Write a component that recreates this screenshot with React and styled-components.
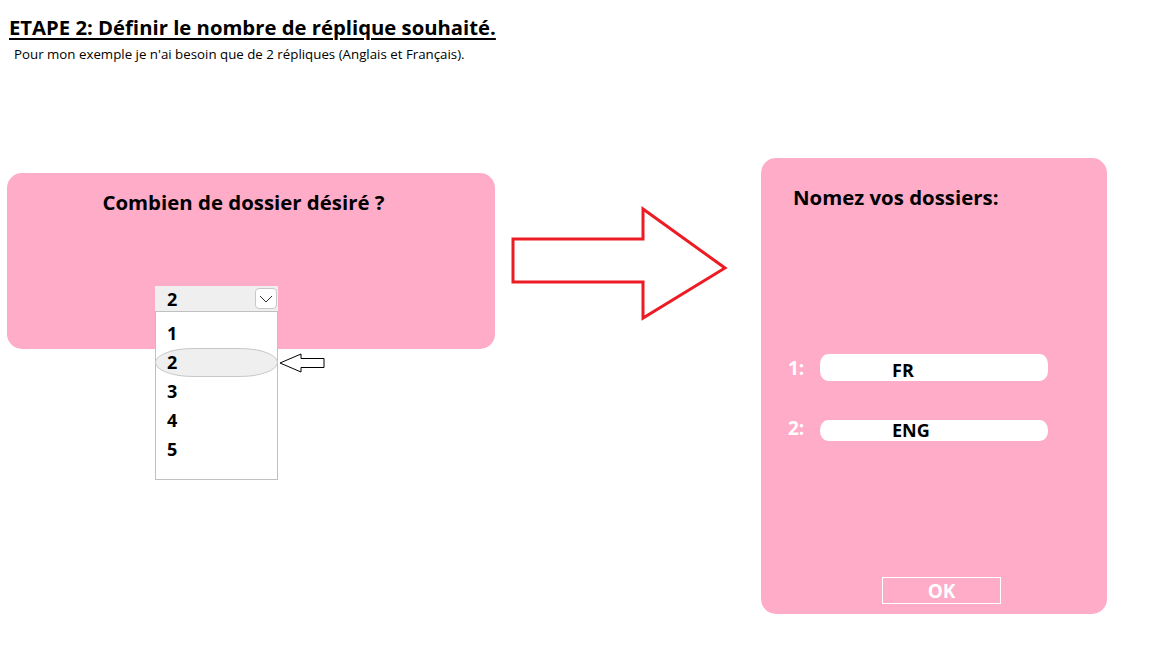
import React from "react";
import styled, { createGlobalStyle } from "styled-components";

const GlobalStyle = createGlobalStyle`
  html, body {
    margin: 0;
    padding: 0;
    background: #fff;
    font-family: "Open Sans", Lato, sans-serif;
    color: #000;
  }
`;

const PINK = "#feacc8";

const Page = styled.div`
  width: 1152px;
  height: 648px;
  overflow: hidden;
`;

const Header = styled.header`
  padding: 15px 0 0 9px;
`;

const Title = styled.h1`
  margin: 0;
  font-size: 20.3px;
  line-height: 24px;
  font-weight: 700;
  text-decoration: underline;
  text-decoration-thickness: 2px;
  text-underline-offset: 3px;
`;

const Subtitle = styled.p`
  margin: 7px 0 0 5px;
  font-size: 13.3px;
  line-height: 16px;
`;

const Main = styled.main`
  display: flex;
  align-items: flex-start;
  margin-top: 96px;
  padding-left: 7px;
`;

const Panel = styled.section`
  background: ${PINK};
  border-radius: 15px;
  width: ${(p) => p.$w}px;
  height: ${(p) => p.$h}px;
  margin-top: ${(p) => p.$top || 0}px;
  box-sizing: border-box;
  display: flex;
  flex-direction: column;
`;

const PanelTitle = styled.h2`
  margin: 0;
  font-size: 20.4px;
  line-height: 24px;
  font-weight: 700;
  text-align: ${(p) => p.$align || "left"};
`;

const Dropdown = styled.div`
  position: relative;
  width: 123px;
  margin: 72px 0 0 148px;
`;

const DropHeader = styled.div`
  height: 25px;
  background: #efefef;
  display: flex;
  align-items: center;
  justify-content: space-between;
  padding: 0 1px 0 12px;
  font-size: 18px;
  font-weight: 700;
`;

const ChevronBtn = styled.span`
  width: 20px;
  height: 19px;
  border: 1px solid #c8c8c8;
  border-radius: 4px;
  background: #fff;
  display: flex;
  align-items: center;
  justify-content: center;
`;

const List = styled.ul`
  position: absolute;
  top: 100%;
  left: 0;
  width: 123px;
  height: 169px;
  box-sizing: border-box;
  margin: 0;
  padding: 7px 0 0;
  list-style: none;
  background: #fff;
  border: 1px solid #c0c0c0;
`;

const Item = styled.li`
  position: relative;
  height: 29px;
  line-height: 29px;
  padding-left: 11px;
  font-size: 18px;
  font-weight: 700;
  box-sizing: border-box;
  ${(p) =>
    p.$active &&
    `
    background: #efefef;
    border: 1px solid #c8c8c8;
    border-radius: 40px / 15px;
    line-height: 27px;
    margin: 0 -1px;
    padding-left: 11px;
  `}
`;

const Pointer = styled.svg`
  position: absolute;
  left: 100%;
  top: 50%;
  margin: -10px 0 0 2px;
`;

const Arrow = styled.svg`
  flex: none;
  margin: 47px 0 0 15px;
`;

const Fields = styled.div`
  margin-top: 145px;
  display: flex;
  flex-direction: column;
  gap: 39px;
`;

const Row = styled.div`
  display: flex;
  align-items: center;
  padding-left: 27px;
`;

const Label = styled.span`
  width: 32px;
  color: #fff;
  font-size: 19px;
  font-weight: 700;
  margin-top: ${(p) => p.$off || 0}px;
`;

const Field = styled.div`
  width: 228px;
  height: ${(p) => p.$h}px;
  background: #fff;
  border-radius: 8px / 10px;
  box-sizing: border-box;
  padding: ${(p) => p.$pt}px 0 0 72px;
  font-size: 18px;
  line-height: 20px;
  font-weight: 700;
`;

const OkButton = styled.button`
  margin: auto 0 10px 121px;
  width: 119px;
  height: 27px;
  background: transparent;
  border: 1px solid #fff;
  color: #fff;
  font-family: inherit;
  font-size: 19px;
  font-weight: 700;
  padding: 2px 0 0;
  line-height: 23px;
`;

const options = [1, 2, 3, 4, 5];

export default function App() {
  return (
    <Page>
      <GlobalStyle />
      <Header>
        <Title>ETAPE 2: Définir le nombre de réplique souhaité.</Title>
        <Subtitle>
          Pour mon exemple je n'ai besoin que de 2 répliques (Anglais et Français).
        </Subtitle>
      </Header>

      <Main>
        <Panel $w={488} $h={176} $top={15} style={{ paddingTop: 17 }}>
          <PanelTitle $align="center" style={{ paddingRight: 15 }}>
            Combien de dossier désiré ?
          </PanelTitle>
          <Dropdown>
            <DropHeader>
              2
              <ChevronBtn>
                <svg width="14" height="8" viewBox="0 0 14 8">
                  <path d="M1 1 L7 7 L13 1" fill="none" stroke="#333" strokeWidth="1" />
                </svg>
              </ChevronBtn>
            </DropHeader>
            <List>
              {options.map((n) => (
                <Item key={n} $active={n === 2}>
                  {n}
                  {n === 2 && (
                    <Pointer width="46" height="20" viewBox="0 0 46 20">
                      <path
                        d="M1 10 L22 1 L22 5.5 L45 5.5 L45 14.5 L22 14.5 L22 19 Z"
                        fill="#fff"
                        stroke="#000"
                        strokeWidth="1"
                      />
                    </Pointer>
                  )}
                </Item>
              ))}
            </List>
          </Dropdown>
        </Panel>

        <Arrow width="220" height="118" viewBox="0 0 220 118">
          <path
            d="M3 34 L133 34 L133 4 L215 63 L133 113 L133 77 L3 77 Z"
            fill="none"
            stroke="#ed1c24"
            strokeWidth="3"
          />
        </Arrow>

        <Panel $w={346} $h={456} style={{ marginLeft: 31, padding: "27px 0 0 32px" }}>
          <PanelTitle>Nomez vos dossiers:</PanelTitle>
          <Fields style={{ marginLeft: -32 }}>
            <Row>
              <Label>1:</Label>
              <Field $h={27} $pt={6}>FR</Field>
            </Row>
            <Row>
              <Label $off={-6}>2:</Label>
              <Field $h={21} $pt={0}>ENG</Field>
            </Row>
          </Fields>
          <OkButton style={{ marginLeft: 89 }}>OK</OkButton>
        </Panel>
      </Main>
    </Page>
  );
}
